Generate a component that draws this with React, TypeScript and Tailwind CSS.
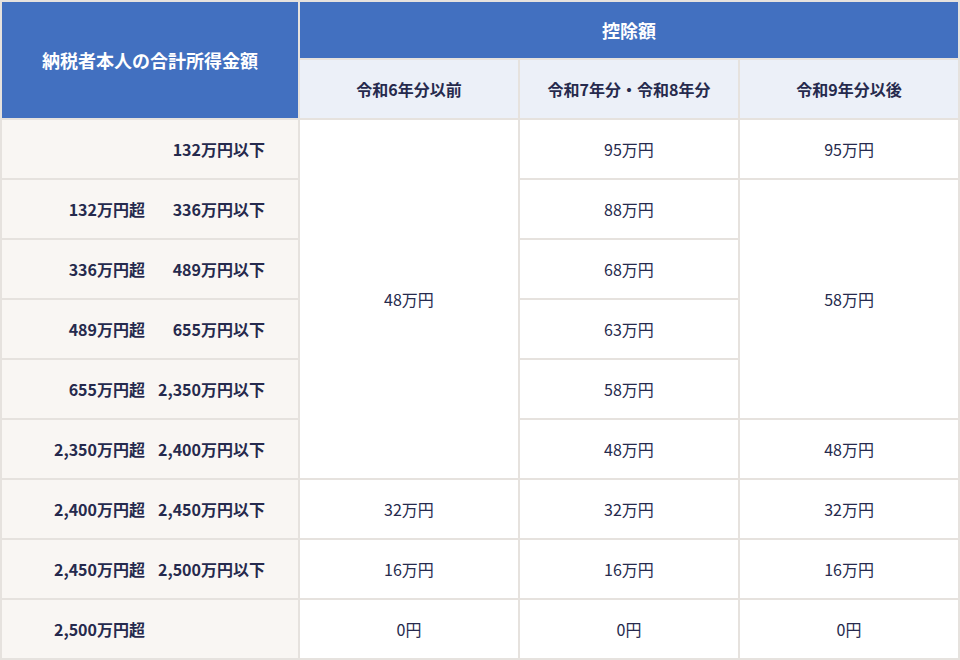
import React from 'react';

type Row = {
  from: string;
  to: string;
  r6?: { text: string; span?: number };
  r7: string;
  r9?: { text: string; span?: number };
};

const rows: Row[] = [
  { from: '', to: '132万円以下', r6: { text: '48万円', span: 6 }, r7: '95万円', r9: { text: '95万円' } },
  { from: '132万円超', to: '336万円以下', r7: '88万円', r9: { text: '58万円', span: 4 } },
  { from: '336万円超', to: '489万円以下', r7: '68万円' },
  { from: '489万円超', to: '655万円以下', r7: '63万円' },
  { from: '655万円超', to: '2,350万円以下', r7: '58万円' },
  { from: '2,350万円超', to: '2,400万円以下', r7: '48万円', r9: { text: '48万円' } },
  { from: '2,400万円超', to: '2,450万円以下', r6: { text: '32万円' }, r7: '32万円', r9: { text: '32万円' } },
  { from: '2,450万円超', to: '2,500万円以下', r6: { text: '16万円' }, r7: '16万円', r9: { text: '16万円' } },
  { from: '2,500万円超', to: '', r6: { text: '0円' }, r7: '0円', r9: { text: '0円' } },
];

const App: React.FC = () => {
  return (
    <div className="w-[960px] h-[660px] bg-white font-['Noto_Sans_CJK_JP','Noto_Sans',sans-serif] text-[#262a4d]">
      <table className="w-[960px] border-separate border-spacing-0.5 bg-[#e6e2de] table-fixed">
        <colgroup>
          <col className="w-[296px]" />
          <col className="w-[218px]" />
          <col className="w-[218px]" />
          <col className="w-[218px]" />
        </colgroup>
        <thead>
          <tr>
            <th rowSpan={2} className="bg-[#4270c0] text-white text-[18px] font-bold p-0">
              納税者本人の合計所得金額
            </th>
            <th colSpan={3} className="h-[56px] bg-[#4270c0] text-white text-[18px] font-bold p-0">
              控除額
            </th>
          </tr>
          <tr>
            <th className="h-[58px] bg-[#ecf0f8] text-[16px] font-bold p-0">令和6年分以前</th>
            <th className="h-[58px] bg-[#ecf0f8] text-[16px] font-bold p-0">令和7年分・令和8年分</th>
            <th className="h-[58px] bg-[#ecf0f8] text-[16px] font-bold p-0">令和9年分以後</th>
          </tr>
        </thead>
        <tbody>
          {rows.map((row, i) => (
            <tr key={i}>
              <td className="h-[58px] bg-[#f9f6f3] p-0">
                <div className="flex justify-end pr-[33px] text-[16px] font-bold">
                  <span className="w-[110px] text-right">{row.from}</span>
                  <span className="w-[110px] ml-[10px] text-right">{row.to}</span>
                </div>
              </td>
              {row.r6 && (
                <td rowSpan={row.r6.span} className="bg-white text-center text-[16px] p-0">
                  {row.r6.text}
                </td>
              )}
              <td className="bg-white text-center text-[16px] p-0">{row.r7}</td>
              {row.r9 && (
                <td rowSpan={row.r9.span} className="bg-white text-center text-[16px] p-0">
                  {row.r9.text}
                </td>
              )}
            </tr>
          ))}
        </tbody>
      </table>
    </div>
  );
};

export default App;
